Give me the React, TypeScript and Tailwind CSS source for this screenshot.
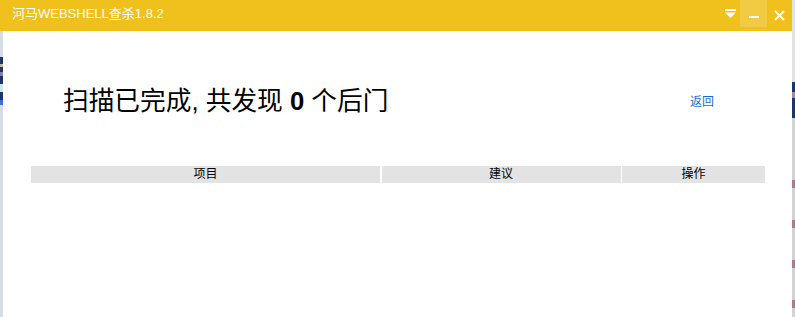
import React from "react";

const cjk = { fontFamily: '"Liberation Sans", "Noto Sans CJK SC", sans-serif' };

function TitleBar() {
  return (
    <div className="flex h-[31px] items-start bg-[#f0c11c] text-white">
      <div className="pl-[12px] pt-[6px] text-[13px] leading-[16px]" style={cjk}>
        河马WEBSHELL查杀1.8.2
      </div>
      <div className="ml-auto flex items-start">
        <button className="flex h-[27px] w-[20px] items-center justify-center">
          <svg width="11" height="9" viewBox="0 0 11 9">
            <rect x="0" y="0" width="11" height="2" fill="#fff" />
            <path d="M0 3.5 H11 L5.5 9 Z" fill="#fff" />
          </svg>
        </button>
        <button className="flex h-[27px] w-[27px] items-center justify-center bg-[#f3cb42]">
          <svg width="10" height="10" viewBox="0 0 10 10">
            <rect x="0" y="7" width="10" height="2" fill="#fff" />
          </svg>
        </button>
        <button className="flex h-[31px] w-[25px] items-center justify-center">
          <svg width="11" height="11" viewBox="0 0 11 11">
            <path d="M1 1 L10 10 M10 1 L1 10" stroke="#fff" strokeWidth="1.8" />
          </svg>
        </button>
      </div>
    </div>
  );
}

function LeftStrip() {
  return (
    <div className="flex w-[3px] flex-col bg-[#d6dce3]">
      <div className="h-[26px]" />
      <div className="flex h-[43px] flex-col bg-[#1f3565]">
        <div className="mt-[7px] h-[3px] bg-[#c7b7a8]" />
        <div className="mt-[5px] h-[4px] bg-[#8a7ea8]" />
        <div className="mt-[8px] h-[8px] bg-[#cfe6ee]" />
      </div>
      <div className="h-[5px] bg-[#3b6fd1]" />
    </div>
  );
}

function RightStrip() {
  return (
    <div className="flex w-[3px] flex-col bg-[#d3d3d3]">
      <div className="h-[82px] bg-[#e2e2e2]" />
      <div className="flex h-[36px] flex-col bg-[#1f3565]">
        <div className="mt-[10px] h-[6px] bg-[#a88a96]" />
      </div>
      <div className="mt-[62px] h-[8px] bg-[#a87c93]" />
      <div className="mt-[32px] h-[8px] bg-[#a87c93]" />
      <div className="mt-[32px] h-[8px] bg-[#a87c93]" />
      <div className="mt-[32px] h-[8px] bg-[#a87c93]" />
    </div>
  );
}

export default function App() {
  return (
    <div className="flex h-[317px] w-[795px] overflow-hidden bg-white">
      <div className="flex w-[792px] flex-col">
        <TitleBar />
        <div className="flex flex-1">
          <LeftStrip />
          <div className="flex-1 bg-white">
            <div className="flex items-center pl-[60px] pr-[78px] pt-[55px]">
              <h1
                className="text-[25.7px] leading-[30px] text-black"
                style={{ fontFamily: '"Liberation Sans", "Noto Sans CJK SC", sans-serif' }}
              >
                扫描已完成, 共发现 <span className="font-bold">0</span> 个后门
              </h1>
              <a className="ml-auto pt-[2px] text-[12px] text-[#1a6dc2]" style={cjk}>
                返回
              </a>
            </div>
            <div
              className="ml-[28px] mt-[50px] grid w-[734px] grid-cols-[349px_239px_143px] gap-x-[1.5px] text-[12px] leading-[17px] text-black"
              style={cjk}
            >
              <div className="bg-[#e3e3e3] text-center">项目</div>
              <div className="bg-[#e3e3e3] text-center">建议</div>
              <div className="bg-[#e3e3e3] text-center">操作</div>
            </div>
          </div>
        </div>
      </div>
      <RightStrip />
    </div>
  );
}
